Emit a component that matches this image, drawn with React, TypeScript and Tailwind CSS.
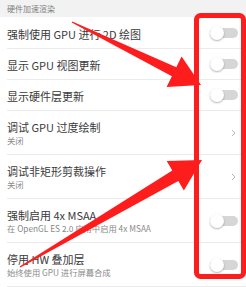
import React from "react";

type Row = { title: string; sub?: string; kind: "toggle" | "chevron"; h: string };

const rows: Row[] = [
  { title: "强制使用 GPU 进行 2D 绘图", kind: "toggle", h: "h-[32px]" },
  { title: "显示 GPU 视图更新", kind: "toggle", h: "h-[31px]" },
  { title: "显示硬件层更新", kind: "toggle", h: "h-[31px]" },
  { title: "调试 GPU 过度绘制", sub: "关闭", kind: "chevron", h: "h-[44px]" },
  { title: "调试非矩形剪裁操作", sub: "关闭", kind: "chevron", h: "h-[44px]" },
  { title: "强制启用 4x MSAA", sub: "在 OpenGL ES 2.0 应用中启用 4x MSAA", kind: "toggle", h: "h-[44px]" },
  { title: "停用 HW 叠加层", sub: "始终使用 GPU 进行屏幕合成", kind: "toggle", h: "h-[44px]" },
];

function Toggle() {
  return (
    <div className="relative w-[28px] h-[14px] flex items-center">
      <div className="w-[28px] h-[10px] rounded-full bg-[#d6d6d6]" />
      <div className="absolute left-0 top-0 w-[14px] h-[14px] rounded-full bg-white shadow-[0_1px_2px_rgba(0,0,0,0.3)]" />
    </div>
  );
}

function Chevron() {
  return (
    <svg width="5" height="8" viewBox="0 0 5 8" className="mr-[2px]">
      <path d="M1 1 L4 4 L1 7" fill="none" stroke="#b8b8b8" strokeWidth="1" />
    </svg>
  );
}

export default function App() {
  return (
    <div
      className="relative w-[246px] h-[287px] bg-white overflow-hidden"
      style={{ fontFamily: '"Noto Sans CJK SC", "Noto Sans", sans-serif' }}
    >
      <div className="h-[17px] bg-[#f2f2f2] flex items-center pl-[7px] text-[8px] leading-none text-[#808080]">
        硬件加速渲染
      </div>
      {rows.map((r, i) => (
        <div key={i} className={`${r.h} pl-[7px] bg-white`}>
          <div className="h-full flex items-center justify-between border-b border-[#ebebeb] pr-[8px]">
            <div className="flex flex-col pt-[2px]">
              <div className="text-[11px] leading-[14px] text-[#3a3a3a] whitespace-nowrap">{r.title}</div>
              {r.sub && (
                <div className="text-[8.3px] leading-[13px] text-[#8a8a8a] whitespace-nowrap">{r.sub}</div>
              )}
            </div>
            {r.kind === "toggle" ? <Toggle /> : <Chevron />}
          </div>
        </div>
      ))}
      <svg
        className="absolute inset-0 pointer-events-none"
        width="246"
        height="287"
        viewBox="0 0 246 287"
      >
        <rect x="196.5" y="15.5" width="47" height="261" rx="4" fill="none" stroke="#fe1d1d" strokeWidth="5" />
        <polygon
          fill="#fe1d1d"
          points="72.3,21.4 176.3,67.3 181.6,56.5 201,85 166.6,87.1 171.9,76.3 71.7,22.6"
        />
        <polygon
          fill="#fe1d1d"
          points="19.6,266.4 172.3,170.5 166.7,161 202,160 183.9,190.4 178.3,180.9 20.4,267.6"
        />
      </svg>
    </div>
  );
}
